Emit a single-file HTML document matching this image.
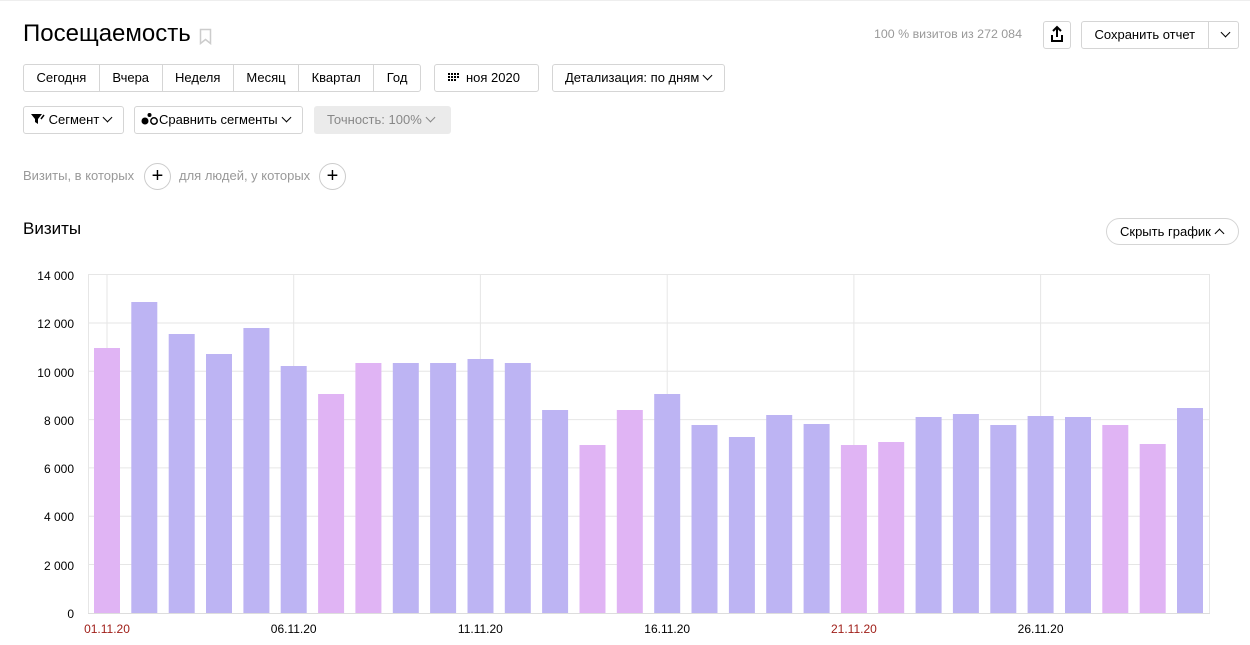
<!DOCTYPE html>
<html><head><meta charset="utf-8"><style>
*{box-sizing:border-box;margin:0;padding:0}
body{width:1250px;height:645px;background:#fff;font-family:"Liberation Sans",Arial,sans-serif;color:#000;position:relative;overflow:hidden}
.a{position:absolute}
.btn{position:absolute;border:1px solid #d5d5d5;border-radius:3px;height:28px;font-size:13px;line-height:26px;background:#fff;white-space:nowrap}
.seg{display:flex}
.seg span{padding:0 12.5px;border-right:1px solid #d5d5d5}
.seg span:last-child{border-right:0}
.chev{display:inline-block;width:7px;height:7px;border-right:1.3px solid #000;border-bottom:1.3px solid #000;transform:rotate(45deg);margin-left:5px;position:relative;top:-3px}
.plus{position:absolute;width:27px;height:27px;border:1px solid #ccc;border-radius:50%;font-size:20px;line-height:24px;text-align:center}
</style></head><body>
<div class="a" style="left:0;top:0;width:1250px;height:1px;background:#eee"></div>
<div class="a" style="left:23px;top:20px;font-size:24px">Посещаемость</div>
<svg class="a" style="left:199px;top:28px" width="14" height="17"><path d="M1.5 1.5h10v14l-5-4-5 4z" fill="none" stroke="#ccc" stroke-width="1.5"/></svg>
<div class="a" style="left:874px;top:27px;font-size:12.4px;color:#999">100 % визитов из 272 084</div>
<div class="btn" style="left:1043px;top:21px;width:28px"><svg width="26" height="26"><path d="M13 5v10M9 9l4-4 4 4M8 13v6h10v-6" fill="none" stroke="#000" stroke-width="2"/></svg></div>
<div class="btn seg" style="left:1081px;top:21px;width:158px"><span style="width:127px">Сохранить отчет</span><span style="padding:0 8px"><i class="chev"></i></span></div>
<div class="btn seg" style="left:23px;top:64px"><span>Сегодня</span><span>Вчера</span><span>Неделя</span><span>Месяц</span><span>Квартал</span><span>Год</span></div>
<div class="btn" style="left:434px;top:64px;width:105px;padding-left:13px"><svg width="14" height="10" style="vertical-align:-1px;margin-right:4px"><g fill="#000"><rect x="0" y="0" width="2" height="2"/><rect x="3" y="0" width="2" height="2"/><rect x="6" y="0" width="2" height="2"/><rect x="9" y="0" width="2" height="2"/><rect x="0" y="3" width="2" height="2"/><rect x="3" y="3" width="2" height="2"/><rect x="6" y="3" width="2" height="2"/><rect x="9" y="3" width="2" height="2"/><rect x="0" y="6" width="2" height="2"/><rect x="3" y="6" width="2" height="2"/><rect x="6" y="6" width="2" height="2"/></g></svg>ноя 2020</div>
<div class="btn" style="left:552px;top:64px;width:173px;padding-left:12px">Детализация: по дням<i class="chev"></i></div>
<div class="btn" style="left:23px;top:106px;width:101px;padding-left:7px"><svg width="14" height="12" style="vertical-align:-1px"><path d="M0 1h11l-4 5v5l-3-2v-3z" fill="#000"/><path d="M10 6l3-4" stroke="#000" stroke-width="1.5"/></svg> Сегмент<i class="chev"></i></div>
<div class="btn" style="left:134px;top:106px;width:169px;padding-left:6px"><svg width="18" height="13" style="vertical-align:-1px"><circle cx="4" cy="9" r="3.5" fill="#000"/><circle cx="13" cy="9" r="3.2" fill="none" stroke="#000" stroke-width="1.5"/><circle cx="8.5" cy="3" r="2" fill="#000"/></svg>Сравнить сегменты<i class="chev"></i></div>
<div class="btn" style="left:314px;top:106px;width:137px;background:#ebebeb;border-color:#ebebeb;color:#888;padding-left:12px">Точность: 100%<i class="chev" style="border-color:#888"></i></div>
<div class="a" style="left:23px;top:168px;font-size:13px;color:#999">Визиты, в которых</div>
<div class="plus" style="left:144px;top:163px">+</div>
<div class="a" style="left:179px;top:168px;font-size:13px;color:#999">для людей, у которых</div>
<div class="plus" style="left:319px;top:163px">+</div>
<div class="a" style="left:23px;top:219px;font-size:17px">Визиты</div>
<div class="btn" style="left:1106px;top:218px;width:133px;height:27px;border-radius:14px;padding-left:13px;line-height:25px">Скрыть график<i class="chev" style="transform:rotate(-135deg);top:1px"></i></div>
<svg class="a" style="left:0;top:260px" width="1250" height="385" font-family="Liberation Sans,Arial,sans-serif" font-size="12">
<g transform="translate(0,-260)">
<g stroke="#e6e6e6" stroke-width="1">
<line x1="88" y1="274.5" x2="1210" y2="274.5"/><line x1="88" y1="323" x2="1210" y2="323"/><line x1="88" y1="371.3" x2="1210" y2="371.3"/><line x1="88" y1="419.6" x2="1210" y2="419.6"/><line x1="88" y1="467.9" x2="1210" y2="467.9"/><line x1="88" y1="516.2" x2="1210" y2="516.2"/><line x1="88" y1="564.5" x2="1210" y2="564.5"/>
<line x1="107" y1="274" x2="107" y2="613"/><line x1="293.7" y1="274" x2="293.7" y2="613"/><line x1="480.4" y1="274" x2="480.4" y2="613"/><line x1="667.2" y1="274" x2="667.2" y2="613"/><line x1="853.9" y1="274" x2="853.9" y2="613"/><line x1="1040.6" y1="274" x2="1040.6" y2="613"/>
<line x1="88.5" y1="274" x2="88.5" y2="613"/><line x1="1209.5" y1="274" x2="1209.5" y2="613"/>
</g>
<g fill="#bdb4f3">
<rect x="131.3" y="302" width="26" height="311"/><rect x="168.7" y="334" width="26" height="279"/><rect x="206" y="354" width="26" height="259"/><rect x="243.4" y="328" width="26" height="285"/><rect x="280.7" y="366" width="26" height="247"/>
<rect x="392.8" y="363" width="26" height="250"/><rect x="430.1" y="363" width="26" height="250"/><rect x="467.5" y="359" width="26" height="254"/><rect x="504.8" y="363" width="26" height="250"/><rect x="542.1" y="410" width="26" height="203"/>
<rect x="654.2" y="394" width="26" height="219"/><rect x="691.5" y="425" width="26" height="188"/><rect x="728.9" y="437" width="26" height="176"/><rect x="766.2" y="415" width="26" height="198"/><rect x="803.6" y="424" width="26" height="189"/>
<rect x="915.6" y="417" width="26" height="196"/><rect x="952.9" y="414" width="26" height="199"/><rect x="990.3" y="425" width="26" height="188"/><rect x="1027.6" y="416" width="26" height="197"/><rect x="1065" y="417" width="26" height="196"/><rect x="1177" y="408" width="26" height="205"/>
</g>
<g fill="#e0b4f4">
<rect x="94" y="348" width="26" height="265"/><rect x="318.1" y="394" width="26" height="219"/><rect x="355.4" y="363" width="26" height="250"/><rect x="579.5" y="445" width="26" height="168"/><rect x="616.8" y="410" width="26" height="203"/><rect x="840.9" y="445" width="26" height="168"/><rect x="878.2" y="442" width="26" height="171"/><rect x="1102.3" y="425" width="26" height="188"/><rect x="1139.7" y="444" width="26" height="169"/>
</g>
<line x1="88" y1="613.5" x2="1210" y2="613.5" stroke="#ddd"/>
<g text-anchor="end" fill="#000">
<text x="74" y="280">14 000</text><text x="74" y="328">12 000</text><text x="74" y="377">10 000</text><text x="74" y="425">8 000</text><text x="74" y="473">6 000</text><text x="74" y="521">4 000</text><text x="74" y="570">2 000</text><text x="74" y="618">0</text>
</g>
<g text-anchor="middle">
<text x="107" y="633" fill="#a0201a">01.11.20</text><text x="293.7" y="633">06.11.20</text><text x="480.4" y="633">11.11.20</text><text x="667.2" y="633">16.11.20</text><text x="853.9" y="633" fill="#a0201a">21.11.20</text><text x="1040.6" y="633">26.11.20</text>
</g>
</g>
</svg>
</body></html>
